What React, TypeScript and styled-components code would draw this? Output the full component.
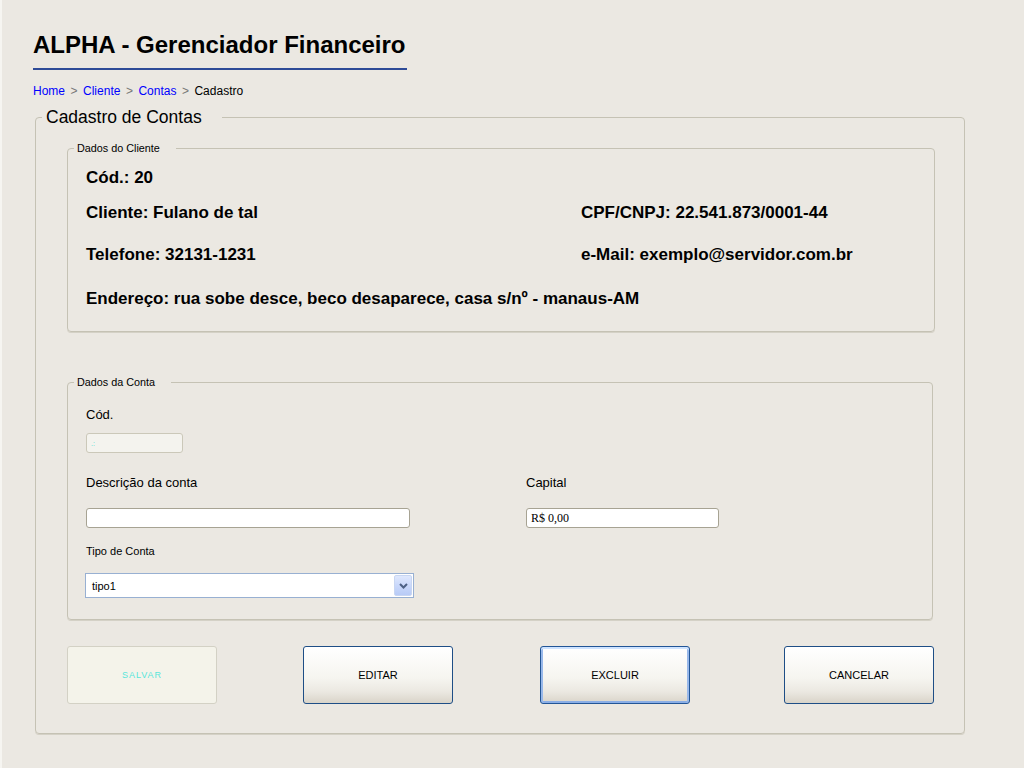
import styled, { createGlobalStyle, css } from 'styled-components';

const GlobalStyle = createGlobalStyle`
  html, body {
    margin: 0;
    padding: 0;
    background: #ebe8e2;
  }
  body {
    font-family: 'Liberation Sans', Arial, sans-serif;
    color: #000;
    border-left: 2px solid #f6f5f1;
    min-height: 768px;
    box-sizing: border-box;
  }
`;

const Page = styled.div`
  padding: 31px 0 0 31px;
  width: 933px;
`;

const Title = styled.h1`
  display: inline-block;
  margin: 0;
  font-size: 24px;
  line-height: 28px;
  font-weight: bold;
  padding: 0 1px 9px 0;
  border-bottom: 2px solid #2e4b97;
`;

const Breadcrumb = styled.nav`
  margin-top: 14px;
  font-size: 12px;
  line-height: 14px;
  color: #000;
`;

const Crumb = styled.a`
  color: #0000ff;
  text-decoration: none;
`;

const Sep = styled.span`
  color: #777;
  margin: 0 5.5px;
`;

const Group = styled.fieldset`
  margin: 0;
  padding: 0;
  border: 1px solid #c5c2b4;
  border-radius: 4px;
  box-shadow: 0 1px 0 #d4d1c6;
  min-width: 0;
`;

const OuterGroup = styled(Group)`
  margin: 9px 0 0 2px;
  width: 930px;
  box-sizing: border-box;
`;

const OuterBody = styled.div`
  padding: 15px 29px 29px 31px;
`;

const Legend = styled.legend<{ $big?: boolean }>`
  margin-left: 6px;
  ${(p) =>
    p.$big
      ? css`
          font-size: 17.5px;
          line-height: 20px;
          padding: 0 20px 0 4px;
        `
      : css`
          font-size: 10.8px;
          line-height: 12px;
          padding: 0 16px 0 3px;
        `}
`;

const ClientGrid = styled.div`
  display: grid;
  grid-template-columns: 495px 1fr;
  padding: 14px 18px 22px 18px;
  font-size: 17px;
  font-weight: bold;
  line-height: 20px;
`;

const Info = styled.div<{ $top: number; $wide?: boolean }>`
  margin-top: ${(p) => p.$top}px;
  white-space: nowrap;
  ${(p) => p.$wide && 'grid-column: 1 / span 2;'}
`;

const AccountGroup = styled(Group)`
  margin-top: 44px;
  margin-right: 2px;
`;

const AccountBody = styled.div`
  padding: 19px 18px 21px 18px;
`;

const Label = styled.div<{ $small?: boolean; $top?: number }>`
  font-size: ${(p) => (p.$small ? '11px' : '13px')};
  line-height: 16px;
  margin-top: ${(p) => p.$top ?? 0}px;
`;

const FieldRow = styled.div`
  display: grid;
  grid-template-columns: 440px 1fr;
  margin-top: 22px;
`;

const TextInput = styled.input<{ $w: number; $serif?: boolean; $top?: number }>`
  display: block;
  box-sizing: border-box;
  width: ${(p) => p.$w}px;
  height: 20px;
  margin: ${(p) => p.$top ?? 17}px 0 0 0;
  padding: 0 4px;
  border: 1px solid #a7a393;
  border-radius: 3px;
  background: #fff;
  font-family: ${(p) =>
    p.$serif ? "'Liberation Serif', 'Times New Roman', serif" : "'Liberation Sans', Arial, sans-serif"};
  font-size: 12px;
  color: #000;
  outline: none;
  &:disabled {
    background: #f4f3ee;
    border-color: #cbc8b9;
    color: #3fdcd0;
    font-size: 7px;
  }
`;

const SelectBox = styled.div`
  margin-top: 14px;
  margin-left: -1px;
  width: 329px;
  height: 25px;
  box-sizing: border-box;
  border: 1px solid #98b0d2;
  background: #fff;
  display: flex;
  align-items: center;
  justify-content: space-between;
  padding: 1px 1px 1px 6px;
  font-size: 11px;
`;

const DropButton = styled.div`
  width: 18px;
  height: 21px;
  box-sizing: border-box;
  border: 1px solid #c8d6f2;
  border-radius: 2px;
  background: linear-gradient(180deg, #dfe8fd 0%, #c9d8fb 50%, #b8cbf6 100%);
  display: flex;
  align-items: center;
  justify-content: center;
`;

const ButtonBar = styled.div`
  display: grid;
  grid-template-columns: 236px 237px 244px 150px;
  margin-top: 26px;
`;

const Button = styled.button<{ $focus?: boolean }>`
  width: 150px;
  height: 58px;
  border: 1px solid #1e4e86;
  border-radius: 3px;
  background: linear-gradient(180deg, #ffffff 0%, #f6f5f0 55%, #ebe8e1 80%, #d9d4c9 100%);
  font-family: 'Liberation Sans', Arial, sans-serif;
  font-size: 11px;
  color: #000;
  padding: 0;
  ${(p) =>
    p.$focus &&
    css`
      box-shadow: inset 0 2px 0 #cee3ff, inset 2px 0 0 #98b8ea, inset -2px 0 0 #98b8ea, inset 0 -2px 0 #8aaee6;
      border-color: #225596;
    `}
  &:disabled {
    background: #f4f3ea;
    border-color: #d3d1c5;
    color: #58e6da;
    font-size: 9px;
    letter-spacing: 1px;
  }
`;

export default function App() {
  return (
    <>
      <GlobalStyle />
      <Page>
        <Title>ALPHA - Gerenciador Financeiro</Title>
        <Breadcrumb>
          <Crumb href="#">Home</Crumb>
          <Sep>&gt;</Sep>
          <Crumb href="#">Cliente</Crumb>
          <Sep>&gt;</Sep>
          <Crumb href="#">Contas</Crumb>
          <Sep>&gt;</Sep>
          Cadastro
        </Breadcrumb>
        <OuterGroup>
          <Legend $big>Cadastro de Contas</Legend>
          <OuterBody>
            <Group>
              <Legend>Dados do Cliente</Legend>
              <ClientGrid>
                <Info $top={0} $wide>Cód.: 20</Info>
                <Info $top={15}>Cliente: Fulano de tal</Info>
                <Info $top={15}>CPF/CNPJ: 22.541.873/0001-44</Info>
                <Info $top={22}>Telefone: 32131-1231</Info>
                <Info $top={22}>e-Mail: exemplo@servidor.com.br</Info>
                <Info $top={24} $wide>
                  Endereço: rua sobe desce, beco desaparece, casa s/nº - manaus-AM
                </Info>
              </ClientGrid>
            </Group>
            <AccountGroup>
              <Legend>Dados da Conta</Legend>
              <AccountBody>
                <Label>Cód.</Label>
                <TextInput $w={97} $top={10} disabled value=".:" readOnly />
                <FieldRow>
                  <div>
                    <Label>Descrição da conta</Label>
                    <TextInput $w={324} defaultValue="" />
                  </div>
                  <div>
                    <Label>Capital</Label>
                    <TextInput $w={193} $serif defaultValue="R$ 0,00" />
                  </div>
                </FieldRow>
                <Label $small $top={15}>Tipo de Conta</Label>
                <SelectBox>
                  <span>tipo1</span>
                  <DropButton>
                    <svg width="9" height="6" viewBox="0 0 9 6">
                      <path d="M1 1 L4.5 4.5 L8 1" fill="none" stroke="#4d6185" strokeWidth="2" />
                    </svg>
                  </DropButton>
                </SelectBox>
              </AccountBody>
            </AccountGroup>
            <ButtonBar>
              <Button disabled>SALVAR</Button>
              <Button>EDITAR</Button>
              <Button $focus>EXCLUIR</Button>
              <Button>CANCELAR</Button>
            </ButtonBar>
          </OuterBody>
        </OuterGroup>
      </Page>
    </>
  );
}
